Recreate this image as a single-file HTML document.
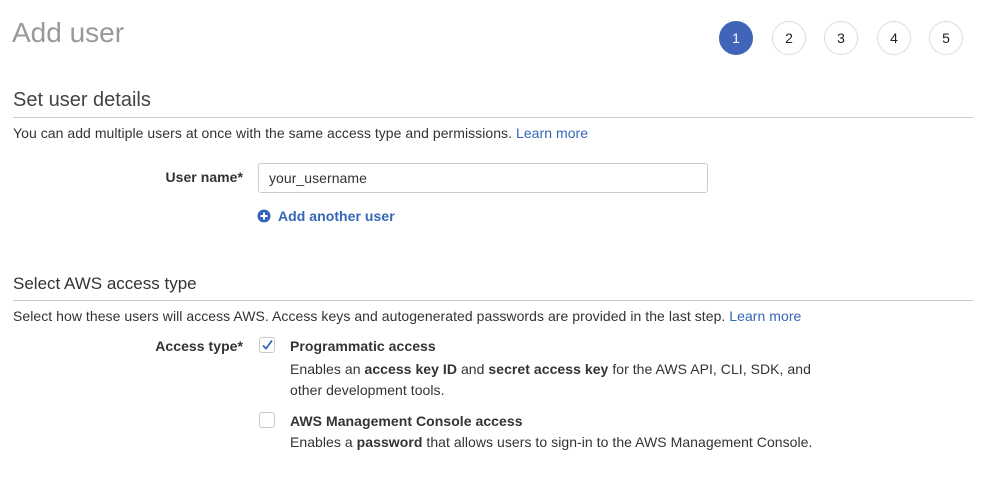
<!DOCTYPE html>
<html><head><meta charset="utf-8"><style>
body{margin:0;width:986px;height:498px;background:#fff;font-family:"Liberation Sans",Arial,sans-serif;color:#333;position:relative;overflow:hidden}
.a{position:absolute;white-space:nowrap;line-height:18px}
.t{font-size:14px;letter-spacing:0.05px}
.b{font-weight:bold}
.l{color:#3466b8}
.c{position:absolute;width:34px;height:34px;border-radius:50%;border:1px solid #ddd;box-sizing:border-box;text-align:center;line-height:32px;font-size:14px;color:#222;top:21px}
.hr{position:absolute;left:13px;width:960px;height:1px;background:#ccc}
.cb{position:absolute;left:259px;width:16px;height:16px;border:1px solid #c8c8c8;border-radius:3px;box-sizing:border-box;background:#fff}
</style></head><body>
<div class="a" style="left:12px;top:17px;font-size:28px;line-height:32px;color:#999">Add user</div>
<div class="c" style="left:719px;background:#3f64b8;border-color:#3f64b8;color:#fff">1</div>
<div class="c" style="left:772px">2</div>
<div class="c" style="left:824px">3</div>
<div class="c" style="left:877px">4</div>
<div class="c" style="left:929px">5</div>

<div class="a" style="left:13px;top:88px;font-size:20px;line-height:24px;color:#444">Set user details</div>
<div class="hr" style="top:117px"></div>
<div class="a t" style="left:13px;top:124px">You can add multiple users at once with the same access type and permissions. <span class="l">Learn more</span></div>
<div class="a t b" style="right:743px;top:168px">User name*</div>
<div style="position:absolute;left:258px;top:163px;width:450px;height:30px;border:1px solid #ccc;border-radius:3px;box-sizing:border-box"></div>
<div class="a t" style="left:269px;top:169px;color:#333">your_username</div>
<svg style="position:absolute;left:257px;top:209px" width="14" height="14" viewBox="0 0 14 14"><circle cx="7" cy="7" r="6.5" fill="#3466b8"/><path d="M7 3.5v7M3.5 7h7" stroke="#fff" stroke-width="2"/></svg>
<div class="a t b l" style="left:278px;top:207px">Add another user</div>

<div class="a" style="left:13px;top:273px;font-size:17px;line-height:22px;color:#333">Select AWS access type</div>
<div class="hr" style="top:300px"></div>
<div class="a t" style="left:13px;top:307px">Select how these users will access AWS. Access keys and autogenerated passwords are provided in the last step. <span class="l">Learn more</span></div>
<div class="a t b" style="right:743px;top:337px">Access type*</div>
<div class="cb" style="top:337px"></div>
<svg style="position:absolute;left:261px;top:339px" width="13" height="12" viewBox="0 0 13 12"><path d="M2 6.5l3 3 6-8" stroke="#3466b8" stroke-width="1.8" fill="none"/></svg>
<div class="a t b" style="left:290px;top:337px">Programmatic access</div>
<div class="a t" style="left:290px;top:359px;line-height:21px">Enables an <b>access key ID</b> and <b>secret access key</b> for the AWS API, CLI, SDK, and<br>other development tools.</div>
<div class="cb" style="top:412px"></div>
<div class="a t b" style="left:290px;top:412px">AWS Management Console access</div>
<div class="a t" style="left:290px;top:433px">Enables a <b>password</b> that allows users to sign-in to the AWS Management Console.</div>
</body></html>
